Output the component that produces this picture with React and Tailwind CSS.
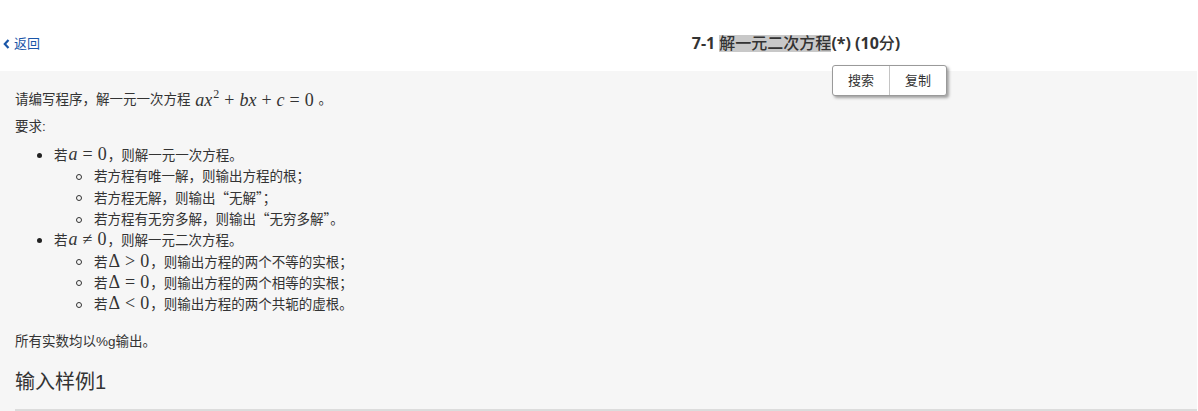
const M = ({ children }) => (
  <span className="font-['Liberation_Serif',serif] text-[18px] leading-none mx-[1px]">{children}</span>
);
const V = ({ children }) => <i className="font-['Liberation_Serif',serif]">{children}</i>;
const Op = ({ children }) => <span className="mx-[5px]">{children}</span>;
const Q = ({ children }) => <span className="font-['Noto_Sans_CJK_SC',sans-serif] leading-none">{children}</span>;

const Dot = () => (
  <span className="w-[39px] shrink-0 flex">
    <span className="ml-[22px] w-[5px] h-[5px] rounded-full bg-[#222]"></span>
  </span>
);
const Circle = () => (
  <span className="w-[39px] shrink-0 flex">
    <span className="ml-[21px] w-[6px] h-[6px] rounded-full border border-[#333]"></span>
  </span>
);

const App = () => {
  const level1 = [
    {
      head: (
        <>
          若<M><V>a</V><Op>=</Op>0</M>，则解一元一次方程。
        </>
      ),
      subs: [
        "若方程有唯一解，则输出方程的根；",
        <>若方程无解，则输出<Q>“无解”</Q>；</>,
        <>若方程有无穷多解，则输出<Q>“无穷多解”</Q>。</>,
      ],
    },
    {
      head: (
        <>
          若<M><V>a</V><Op>≠</Op>0</M>，则解一元二次方程。
        </>
      ),
      subs: [
        <>若<M>Δ<Op>&gt;</Op>0</M>，则输出方程的两个不等的实根；</>,
        <>若<M>Δ<Op>=</Op>0</M>，则输出方程的两个相等的实根；</>,
        <>若<M>Δ<Op>&lt;</Op>0</M>，则输出方程的两个共轭的虚根。</>,
      ],
    },
  ];

  return (
    <div className="w-[1198px] h-[411px] overflow-hidden bg-white text-[#333] font-['Liberation_Sans','Noto_Sans_CJK_SC',sans-serif]">
      {/* header */}
      <header className="relative h-[71px] grid grid-cols-[394px_1fr] items-start pt-[32px]">
        <a className="flex items-center gap-[4px] pl-[3px] mt-[3px] text-[13px] leading-[18px] text-[#1a56a8]">
          <svg width="7" height="10" viewBox="0 0 7 10">
            <path d="M5.5 1 L1.8 5 L5.5 9" fill="none" stroke="#1a56a8" strokeWidth="2.2" />
          </svg>
          返回
        </a>
        <h1 className="text-center text-[16px] leading-[22px] font-bold text-[#333]">
          <span className="font-['Open_Sans',sans-serif]">7-1 </span>
          <span className="bg-[#c8c8c8] font-medium">解一元二次方程</span>
          <span className="font-['Open_Sans',sans-serif]">(*) (10</span>
          <span className="font-medium">分</span>
          <span className="font-['Open_Sans',sans-serif]">)</span>
        </h1>
        <div className="absolute left-[832px] top-[65px] z-10 flex h-[31px] bg-white border border-[#9a9a9a] rounded-[3px] shadow-[2px_2px_3px_rgba(0,0,0,0.35)] text-[13px] text-[#333]">
          <button className="w-[56px] flex items-center justify-center">搜索</button>
          <button className="w-[57px] flex items-center justify-center border-l border-[#c4c4c4]">复制</button>
        </div>
      </header>

      {/* content */}
      <main className="bg-[#f6f6f6] mr-[1px] h-[340px] pl-[15px] pt-[18px] text-[13.5px] leading-[21px]">
        <p className="h-[21px] flex items-center">
          请编写程序，解一元一次方程&nbsp;
          <M>
            <V>ax</V>
            <span className="relative top-[-8px] text-[12px] ml-[1px]">2</span>
            <Op>+</Op>
            <V>bx</V>
            <Op>+</Op>
            <V>c</V>
            <Op>=</Op>0
          </M>
          &nbsp;。
        </p>
        <p className="mt-[6px] h-[21px]">要求:</p>
        <ul className="mt-[8px]">
          {level1.map((item, i) => (
            <li key={i}>
              <div className="flex items-center h-[21.3px]">
                <Dot />
                <span>{item.head}</span>
              </div>
              <ul className="pl-[40px]">
                {item.subs.map((s, j) => (
                  <li key={j} className="flex items-center h-[21.3px]">
                    <Circle />
                    <span>{s}</span>
                  </li>
                ))}
              </ul>
            </li>
          ))}
        </ul>
        <p className="mt-[16px] h-[21px]">所有实数均以%g输出。</p>
        <h3 className="mt-[16px] h-[28px] text-[20px] leading-[28px] text-[#333]">输入样例1</h3>
        <div className="mt-[13px] h-[2px] bg-[#dcdcdc]"></div>
      </main>
    </div>
  );
};

export default App;
